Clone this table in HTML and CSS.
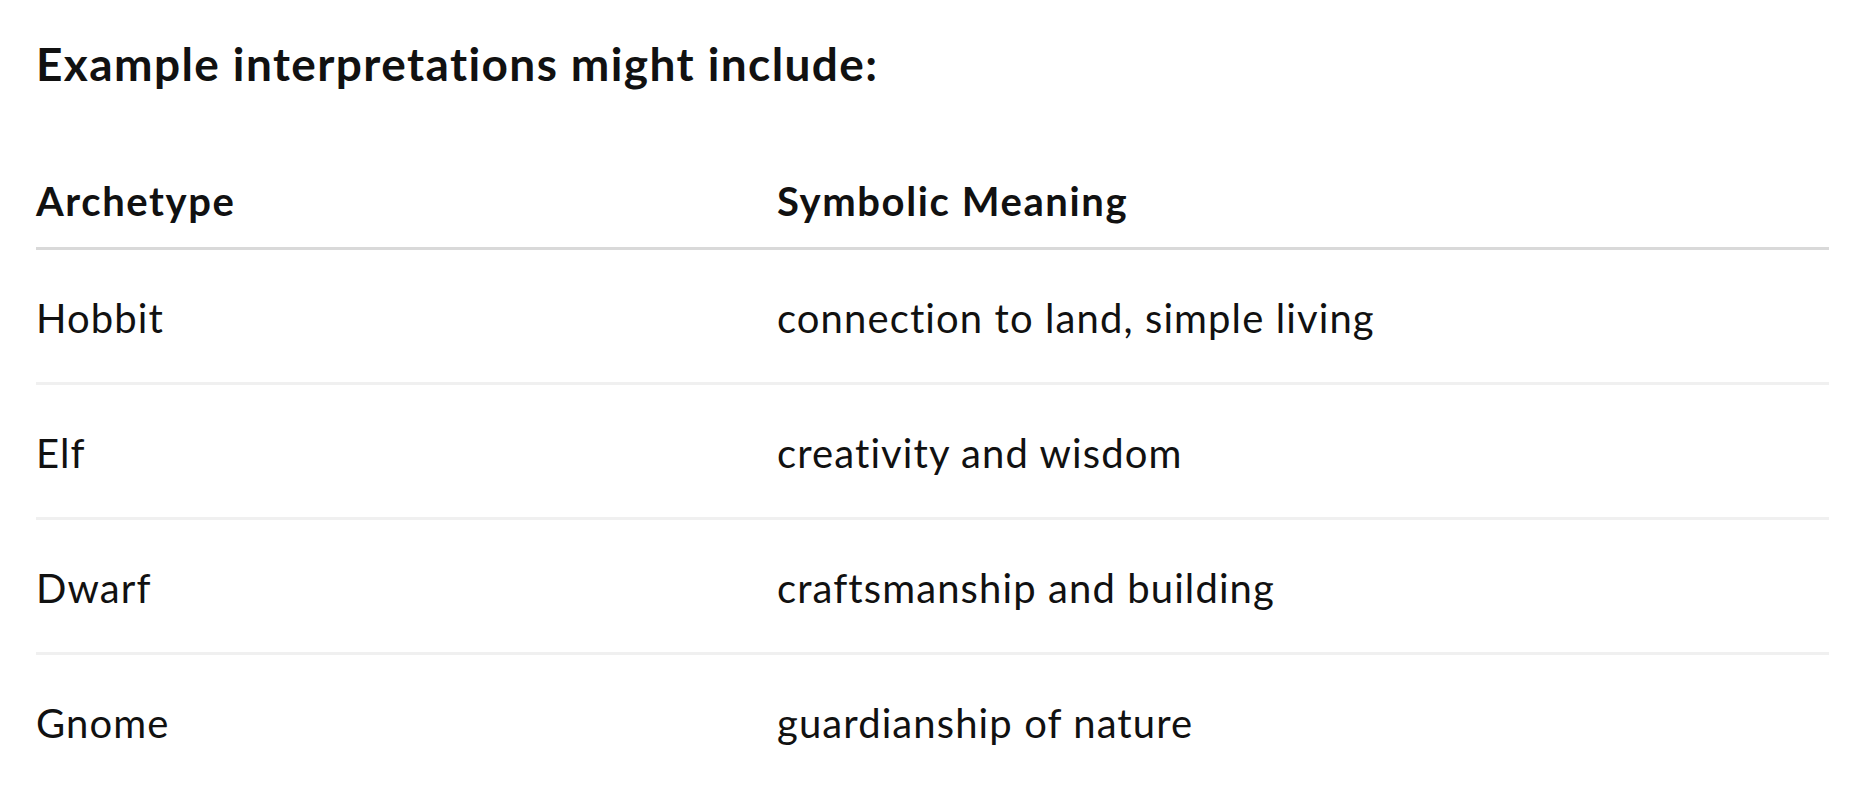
FILE: index.html
```html
<!DOCTYPE html>
<html lang="en">
<head>
<meta charset="utf-8">
<title>Example interpretations</title>
<link rel="stylesheet" href="styles.css">
</head>
<body>
<main class="content">
  <h2 class="title">Example interpretations might include:</h2>
  <table class="grid">
    <thead>
      <tr>
        <th class="col-a">Archetype</th>
        <th>Symbolic Meaning</th>
      </tr>
    </thead>
    <tbody>
      <tr><td>Hobbit</td><td>connection to land, simple living</td></tr>
      <tr><td>Elf</td><td>creativity and wisdom</td></tr>
      <tr><td>Dwarf</td><td>craftsmanship and building</td></tr>
      <tr><td>Gnome</td><td>guardianship of nature</td></tr>
    </tbody>
  </table>
</main>
</body>
</html>
```

FILE: styles.css
```css
html, body {
  margin: 0;
  padding: 0;
  background: #ffffff;
}

body {
  font-family: "Lato", "Open Sans", sans-serif;
  color: #111111;
}

.content {
  padding: 32px 45px 0 36px;
}

.title {
  margin: 0;
  font-size: 46px;
  line-height: 64px;
  font-weight: 700;
  letter-spacing: 1.4px;
}

.grid {
  margin-top: 57px;
  width: 100%;
  border-collapse: collapse;
}

.grid th {
  text-align: left;
  font-size: 40px;
  font-weight: 700;
  line-height: 56px;
  letter-spacing: 1.6px;
  padding: 20px 0 18px 0;
  border-bottom: 3px solid #d9d9d9;
}

.grid .col-a {
  width: 741px;
}

.grid td {
  font-size: 40px;
  font-weight: 400;
  line-height: 56px;
  letter-spacing: 1.1px;
  padding: 40px 0 36px 0;
  border-bottom: 3px solid #f0f0f0;
}

.grid tbody tr:last-child td {
  border-bottom: none;
}
```
